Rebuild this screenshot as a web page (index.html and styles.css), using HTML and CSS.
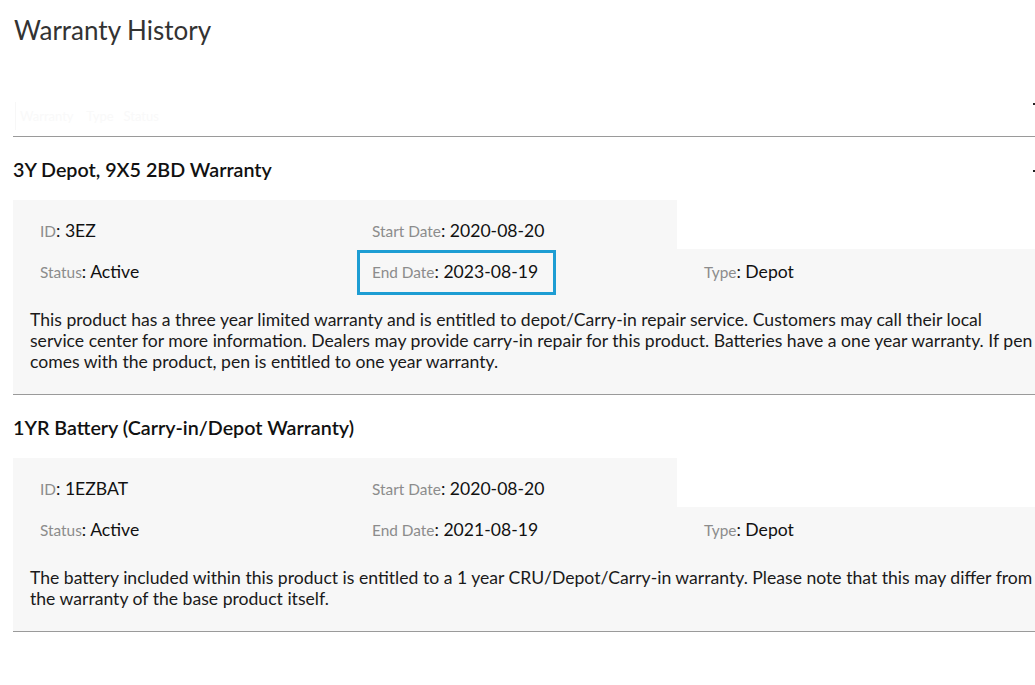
FILE: index.html
```html
<!DOCTYPE html>
<html lang="en">
<head>
<meta charset="utf-8">
<title>Warranty History</title>
<link rel="stylesheet" href="styles.css">
</head>
<body>
<div class="page">
  <h1 class="title">Warranty History</h1>

  <div class="toolbar">
    <span class="ghost">Warranty&nbsp;&nbsp;&nbsp;&nbsp;Type&nbsp;&nbsp;&nbsp;Status</span>
    <span class="edge-icon"></span>
  </div>

  <section class="warranty">
    <div class="w-head">
      <h2 class="w-name">3Y Depot, 9X5 2BD Warranty</h2>
      <span class="edge-icon"></span>
    </div>
    <div class="w-body">
      <div class="fields">
        <div class="cell top"><span class="lbl">ID</span>: 3EZ</div>
        <div class="cell top"><span class="lbl">Start Date</span>: 2020-08-20</div>
        <div class="cell empty"></div>
        <div class="cell"><span class="lbl">Status</span>: Active</div>
        <div class="cell"><span class="lbl">End Date</span>: 2023-08-19<span class="highlight"></span></div>
        <div class="cell"><span class="lbl">Type</span>: Depot</div>
      </div>
      <p class="desc">This product has a three year limited warranty and is entitled to depot/Carry-in repair service. Customers may call their local service center for more information. Dealers may provide carry-in repair for this product. Batteries have a one year warranty. If pen comes with the product, pen is entitled to one year warranty.</p>
    </div>
  </section>

  <section class="warranty">
    <div class="w-head">
      <h2 class="w-name">1YR Battery (Carry-in/Depot Warranty)</h2>
    </div>
    <div class="w-body">
      <div class="fields">
        <div class="cell top"><span class="lbl">ID</span>: 1EZBAT</div>
        <div class="cell top"><span class="lbl">Start Date</span>: 2020-08-20</div>
        <div class="cell empty"></div>
        <div class="cell"><span class="lbl">Status</span>: Active</div>
        <div class="cell"><span class="lbl">End Date</span>: 2021-08-19</div>
        <div class="cell"><span class="lbl">Type</span>: Depot</div>
      </div>
      <p class="desc">The battery included within this product is entitled to a 1 year CRU/Depot/Carry-in warranty. Please note that this may differ from the warranty of the base product itself.</p>
    </div>
  </section>
</div>
</body>
</html>
```

FILE: styles.css
```css
html, body {
  margin: 0;
  padding: 0;
  background: #ffffff;
  overflow: hidden;
}

body {
  font-family: Lato, "Open Sans", "Liberation Sans", sans-serif;
  color: #1a1a1a;
}

.page {
  width: 1039px;
  margin-left: 13px;
}

.title {
  margin: 14px 0 0 1px;
  font-size: 26px;
  line-height: 32px;
  font-weight: 400;
  color: #333333;
}

.toolbar {
  height: 90px;
  display: flex;
  justify-content: space-between;
  align-items: flex-start;
  border-bottom: 1px solid #9a9a9a;
}

.ghost {
  margin-top: 56px;
  margin-left: 2px;
  font-size: 13px;
  color: #f9f9f9;
  border-left: 1px solid #f7f7f7;
  padding: 6px 0 6px 4px;
}

.edge-icon {
  width: 14px;
  height: 2px;
  margin-top: 57px;
  margin-right: 5px;
  background: linear-gradient(to right, #222 0 2px, transparent 2px);
}

.warranty {
  border-bottom: 1px solid #9a9a9a;
}

.w-head {
  display: flex;
  justify-content: space-between;
  align-items: center;
  height: 63px;
  box-sizing: border-box;
  padding: 21px 0 18px;
}

.w-head .edge-icon {
  margin-top: 2px;
}

.w-name {
  margin: 0;
  font-size: 19.7px;
  line-height: 24px;
  font-weight: 600;
  color: #111111;
}

.fields {
  display: grid;
  grid-template-columns: 332px 332px 1fr;
}

.cell {
  position: relative;
  box-sizing: border-box;
  height: 46px;
  background: #f7f7f7;
  padding: 12px 0 0 27px;
  font-size: 17.6px;
  line-height: 22px;
  color: #111111;
}

.cell.top {
  height: 49px;
  padding-top: 20px;
}

.cell.empty {
  background: #ffffff;
}

.lbl {
  font-size: 15.4px;
  line-height: 1;
  color: #8c8c8c;
}

.highlight {
  position: absolute;
  left: 12px;
  top: 1px;
  width: 199px;
  height: 45px;
  box-sizing: border-box;
  border: 3px solid #1e9dd3;
}

.desc {
  margin: 0;
  background: #f7f7f7;
  padding: 14px 14px 22px 17px;
  font-size: 17.6px;
  line-height: 21px;
  color: #1a1a1a;
}
```
